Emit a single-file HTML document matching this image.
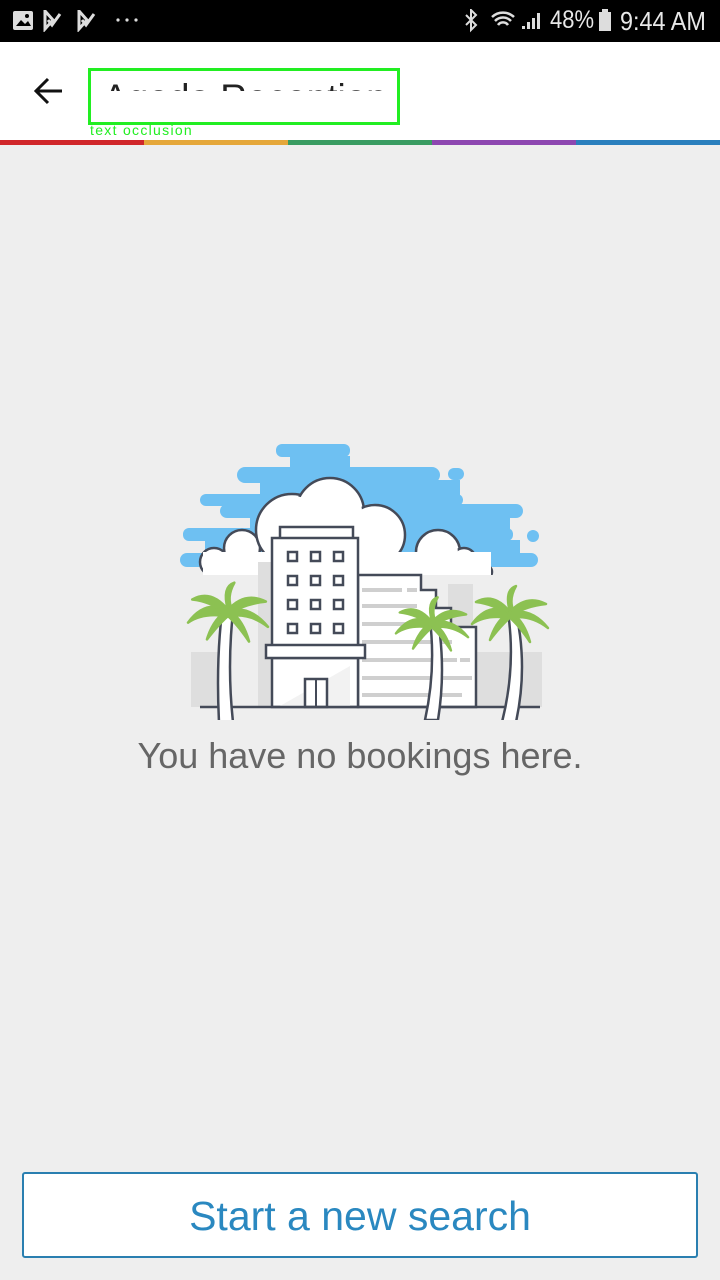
<!DOCTYPE html>
<html><head><meta charset="utf-8"><style>
*{margin:0;padding:0;box-sizing:border-box}
body{width:720px;height:1280px;background:#eeeeee;position:relative;overflow:hidden;font-family:"Liberation Sans",sans-serif}
.sb{position:absolute;left:0;top:0;width:720px;height:42px;background:#000;color:#e8e8e8}
.hdr{position:absolute;left:0;top:42px;width:720px;height:98px;background:#fff}
.stripe{position:absolute;top:140px;height:5px;width:144px}
.abs{position:absolute}
</style></head><body>
<div class="sb">
<svg class="abs" style="left:12px;top:10px" width="130" height="22">
<rect x="1" y="1" width="20" height="19" rx="2" fill="#ddd"/><path d="M4 16l5-6 4 4 3-3 3 5z" fill="#000"/><circle cx="15" cy="6" r="2" fill="#000"/>
<path d="M33 1l8 9-8 9z M36 10l4 5 8-11" fill="none" stroke="#ddd" stroke-width="3"/>
<path d="M67 1l8 9-8 9z M70 10l4 5 8-11" fill="none" stroke="#ddd" stroke-width="3"/>
<circle cx="106" cy="10" r="1.6" fill="#ddd"/><circle cx="115" cy="10" r="1.6" fill="#ddd"/><circle cx="124" cy="10" r="1.6" fill="#ddd"/>
</svg>
<svg class="abs" style="left:462px;top:9px" width="86" height="24">
<path d="M4 6l10 10-5 5V1l5 5L4 16" fill="none" stroke="#ddd" stroke-width="2"/>
<path d="M30 8a16 16 0 0 1 22 0M33 12a11 11 0 0 1 16 0M36 16a6 6 0 0 1 10 0" fill="none" stroke="#ddd" stroke-width="2.5"/>
<path d="M60 20h3v-3h-3zM65 20h3v-7h-3zM70 20h3v-11h-3zM75 20h3v-16h-3z" fill="#ddd"/>
</svg>
<div class="abs" style="left:550px;top:6px;font-size:25px;color:#e8e8e8;transform:scaleX(0.88);transform-origin:left">48%</div>
<svg class="abs" style="left:598px;top:9px" width="14" height="24"><rect x="1" y="3" width="12" height="19" fill="#ddd"/><rect x="4" y="0" width="6" height="3" fill="#ddd"/></svg>
<div class="abs" style="left:620px;top:6px;font-size:26px;color:#e8e8e8;transform:scaleX(0.9);transform-origin:left">9:44 AM</div>
</div>
<div class="hdr">
<svg class="abs" style="left:32px;top:35px" width="32" height="28"><path d="M30 14H4M16 2L4 14l12 12" fill="none" stroke="#111" stroke-width="3"/></svg>
<div class="abs" style="left:88px;top:26px;width:312px;height:57px;border:3px solid #22ee22;overflow:hidden;background:#fff">
<div style="position:absolute;left:12px;top:6px;font-size:37px;color:#222;height:14px;overflow:hidden;line-height:42px;white-space:nowrap">Agoda Reception</div>
</div>
<div class="abs" style="left:90px;top:80px;font-size:14px;letter-spacing:1.3px;color:#22ee22">text occlusion</div>
</div>
<div class="stripe" style="left:0;background:#d0262a"></div>
<div class="stripe" style="left:144px;background:#e5a73a"></div>
<div class="stripe" style="left:288px;background:#3a9c62"></div>
<div class="stripe" style="left:432px;background:#8d47b0"></div>
<div class="stripe" style="left:576px;background:#2a7fbd"></div>

<svg class="abs" style="left:0;top:0" width="720" height="720">
<defs>
<g id="palm">
<path d="M0 0Q-22-10-38 12Q-24 2 0 6z"/>
<path d="M0 0Q-16-20-34-10Q-16-8 0 4z"/>
<path d="M0 0Q-6-22 6-26Q-2-12 4 0z"/>
<path d="M0 0Q16-18 36-8Q16-6 0 4z"/>
<path d="M0 0Q22-4 38 16Q20 2 0 6z"/>
<path d="M0 0Q-14 8-20 28Q-8 12 2 4z"/>
<path d="M0 0Q14 8 20 30Q8 12-2 4z"/>
</g>
</defs>
<g fill="#6ec0f2">
<rect x="276" y="444" width="74" height="13" rx="6"/>
<rect x="290" y="456" width="60" height="14"/>
<rect x="237" y="467" width="203" height="16" rx="8"/>
<rect x="448" y="468" width="16" height="12" rx="6"/>
<rect x="260" y="480" width="200" height="18"/>
<rect x="200" y="494" width="263" height="12" rx="6"/>
<rect x="220" y="504" width="303" height="14" rx="7"/>
<rect x="250" y="516" width="260" height="16"/>
<rect x="183" y="528" width="330" height="13" rx="6"/>
<rect x="527" y="530" width="12" height="12" rx="6"/>
<rect x="205" y="540" width="315" height="14"/>
<rect x="180" y="553" width="358" height="14" rx="7"/>
</g>
<g fill="#fff" stroke="#444a58" stroke-width="2.5">
<circle cx="214" cy="562" r="14"/><circle cx="242" cy="548" r="18"/><circle cx="292" cy="530" r="36"/>
<circle cx="330" cy="512" r="34"/><circle cx="375" cy="535" r="30"/>
<circle cx="438" cy="552" r="22"/><circle cx="464" cy="560" r="12"/><circle cx="485" cy="572" r="7"/>
</g>
<g fill="#fff"><rect x="203" y="552" width="288" height="30"/><circle cx="330" cy="512" r="32"/><circle cx="292" cy="530" r="34"/><circle cx="375" cy="535" r="28"/><circle cx="438" cy="553" r="20"/><circle cx="242" cy="549" r="16"/><circle cx="464" cy="561" r="10"/><circle cx="214" cy="563" r="12"/></g>
<rect x="190" y="575" width="360" height="132" fill="#eeeeee"/>
<g fill="#dedede">
<rect x="258" y="562" width="20" height="145"/><rect x="191" y="652" width="40" height="55"/>
<rect x="448" y="584" width="25" height="123"/><rect x="470" y="652" width="72" height="55"/>
</g>
<path d="M358 575h63v15h15v18h15v19h25v80H358z" fill="#fff" stroke="#444a58" stroke-width="2.5"/>
<g stroke="#cfcfcf" stroke-width="4"><path d="M362 590h40M407 590h10M362 606h55M362 624h70M362 642h90M362 660h95M460 660h10M362 678h100M462 678h10M362 695h100"/></g>
<rect x="280" y="527" width="73" height="12" fill="#fff" stroke="#444a58" stroke-width="2.5"/>
<rect x="272" y="538" width="86" height="108" fill="#fff" stroke="#444a58" stroke-width="2.5"/>
<g fill="none" stroke="#444a58" stroke-width="2.5">
<rect x="288" y="552" width="9" height="9"/><rect x="311" y="552" width="9" height="9"/><rect x="334" y="552" width="9" height="9"/>
<rect x="288" y="576" width="9" height="9"/><rect x="311" y="576" width="9" height="9"/><rect x="334" y="576" width="9" height="9"/>
<rect x="288" y="600" width="9" height="9"/><rect x="311" y="600" width="9" height="9"/><rect x="334" y="600" width="9" height="9"/>
<rect x="288" y="624" width="9" height="9"/><rect x="311" y="624" width="9" height="9"/><rect x="334" y="624" width="9" height="9"/>
</g>
<rect x="272" y="658" width="86" height="49" fill="#fff" stroke="#444a58" stroke-width="2.5"/>
<path d="M280 706l70-40v40z" fill="#f2f2f2"/>
<rect x="266" y="645" width="99" height="13" fill="#fff" stroke="#444a58" stroke-width="2.5"/>
<rect x="305" y="679" width="22" height="28" fill="#fff" stroke="#444a58" stroke-width="2.5"/><path d="M316 679v28" stroke="#444a58" stroke-width="2"/>
<path d="M200 707h340" stroke="#444a58" stroke-width="2.5"/>
<g fill="#fff" stroke="#444a58" stroke-width="2.5">
<path d="M222 612q-6 50 -3 110h14q-6-55 0-110z"/>
<path d="M430 620q6 50 -5 100h13q8-50 0-100z"/>
<path d="M508 612q8 55 -6 110h14q12-55 0-110z"/>
</g>
<g fill="#8cc152" stroke="#8cc152" stroke-width="2.5" stroke-linejoin="round">
<use href="#palm" transform="translate(228 610) scale(1.05)"/>
<use href="#palm" transform="translate(432 622) scale(0.95)"/>
<use href="#palm" transform="translate(510 612) scale(1.0)"/>
</g>
</svg>
<div class="abs" style="left:0;top:735px;width:720px;text-align:center;font-size:36px;color:#666">You have no bookings here.</div>
<div class="abs" style="left:22px;top:1172px;width:676px;height:86px;background:#fff;border:2px solid #2a7fb0;border-radius:3px;text-align:center;line-height:84px;font-size:41px;color:#2a88c0">Start a new search</div>
</body></html>
